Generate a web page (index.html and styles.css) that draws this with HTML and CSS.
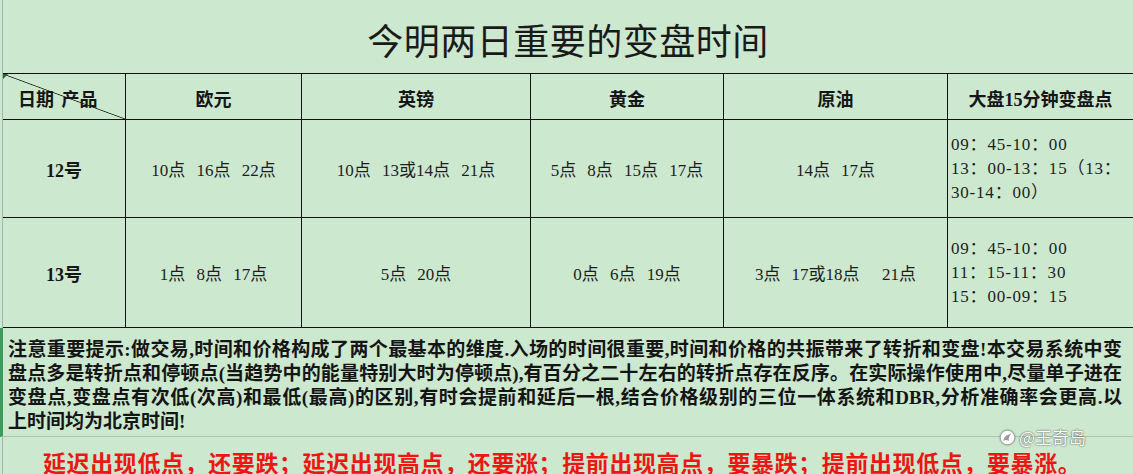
FILE: index.html
```html
<!DOCTYPE html>
<html lang="zh-CN">
<head>
<meta charset="utf-8">
<title>今明两日重要的变盘时间</title>
<link rel="stylesheet" href="styles.css">
</head>
<body>
<div class="sheet">
  <h1 class="title">今明两日重要的变盘时间</h1>
  <div class="grid">
    <div class="cell head corner">日期 产品</div>
    <div class="cell head">欧元</div>
    <div class="cell head">英镑</div>
    <div class="cell head">黄金</div>
    <div class="cell head">原油</div>
    <div class="cell head end">大盘15分钟变盘点</div>

    <div class="cell label">12号</div>
    <div class="cell data">10点 16点 22点</div>
    <div class="cell data">10点 13或14点 21点</div>
    <div class="cell data">5点 8点 15点 17点</div>
    <div class="cell data">14点 17点</div>
    <div class="cell times end">09：45-10：00<br>13：00-13：15（13：<br>30-14：00）</div>

    <div class="cell label">13号</div>
    <div class="cell data">1点 8点 17点</div>
    <div class="cell data">5点 20点</div>
    <div class="cell data">0点 6点 19点</div>
    <div class="cell data">3点 17或18点  21点</div>
    <div class="cell times end">09：45-10：00<br>11：15-11：30<br>15：00-09：15</div>
  </div>
  <div class="note">
    <p class="line">注意重要提示:做交易,时间和价格构成了两个最基本的维度.入场的时间很重要,时间和价格的共振带来了转折和变盘!本交易系统中变</p>
    <p class="line">盘点多是转折点和停顿点(当趋势中的能量特别大时为停顿点),有百分之二十左右的转折点存在反序。在实际操作使用中,尽量单子进在</p>
    <p class="line">变盘点,变盘点有次低(次高)和最低(最高)的区别,有时会提前和延后一根,结合价格级别的三位一体系统和DBR,分析准确率会更高.以</p>
    <p class="line last">上时间均为北京时间!</p>
  </div>
  <div class="warn">延迟出现低点，还要跌；延迟出现高点，还要涨；提前出现高点，要暴跌；提前出现低点，要暴涨。</div>
  <div class="mark">
    <svg class="mark-icon" viewBox="0 0 20 20" width="17" height="17" aria-hidden="true">
      <circle cx="10" cy="10" r="8.5" fill="#ffffff" stroke="#8a8a8a" stroke-width="0.8"/>
      <path d="M5 14 C6 9 9 6.5 14.5 5.5 C12 8 11 10.5 11.5 14.5 C9.5 12.5 7.5 12.5 5 14 Z" fill="#9a9a9a"/>
    </svg>
    <span class="mark-text">@王奇岛</span>
  </div>
</div>
</body>
</html>
```
FILE: styles.css
```css
html, body {
  margin: 0;
  padding: 0;
}

body {
  width: 1133px;
  height: 474px;
  overflow: hidden;
  background: #cce8cf;
  color: #161616;
  font-family: "Liberation Serif", "Noto Sans CJK SC", serif;
}

.sheet {
  position: relative;
  margin-left: 2px;
  height: 474px;
  border-left: 1px solid #a3b6ab;
}

.title {
  margin: 0;
  height: 73px;
  box-sizing: border-box;
  padding-top: 4px;
  display: flex;
  align-items: center;
  justify-content: center;
  font-family: "Noto Sans CJK SC", serif;
  font-size: 36px;
  font-weight: 400;
  letter-spacing: 0.5px;
  color: #1a1a1a;
}

.grid {
  display: grid;
  grid-template-columns: 123px 176px 229px 193px 224px 185px;
  grid-template-rows: 46px 98px 110px;
  border-top: 1px solid #111;
}

.cell {
  box-sizing: border-box;
  border-right: 1px solid #111;
  border-bottom: 1px solid #111;
  display: flex;
  align-items: center;
  justify-content: center;
  font-size: 17px;
}

.cell.end {
  border-right: none;
}

.head {
  font-size: 18px;
  font-weight: 700;
  padding-top: 2px;
}

.corner {
  position: relative;
  justify-content: flex-start;
  padding-left: 15px;
  word-spacing: 3px;
  background: linear-gradient(to top right, transparent calc(50% - 0.8px), #222 50%, transparent calc(50% + 0.8px));
}

.corner::before {
  content: "";
  position: absolute;
  left: 0;
  top: 0;
  border-top: 5px solid #1d6b34;
  border-right: 5px solid transparent;
}

.label {
  font-size: 18px;
  font-weight: 700;
}

.data {
  white-space: pre;
  word-spacing: 7px;
  color: #1e1e1e;
}

.times {
  justify-content: flex-start;
  padding-left: 3px;
  line-height: 24px;
  letter-spacing: 0.8px;
  color: #1e1e1e;
}

.note {
  margin-left: -3px;
  height: 109px;
  box-sizing: border-box;
  border-left: 3px solid #3b9b5c;
  border-bottom: 1px solid #aec3b2;
  padding: 10px 11px 0 5px;
  font-size: 19px;
  font-weight: 700;
  line-height: 24px;
  color: #151515;
}

.line {
  margin: 0;
  white-space: nowrap;
  text-align: justify;
  text-align-last: justify;
}

.line.last {
  text-align-last: left;
}

.warn {
  padding: 14px 0 0 40px;
  font-family: "Noto Sans CJK SC", serif;
  font-size: 23px;
  letter-spacing: 0.6px;
  font-weight: 700;
  line-height: 22px;
  color: #ee1612;
  white-space: nowrap;
}

.mark {
  position: absolute;
  left: 996px;
  top: 427px;
  display: flex;
  align-items: center;
  gap: 3px;
}

.mark-icon {
  filter: drop-shadow(0 0 1px rgba(0, 0, 0, 0.35));
}

.mark-text {
  font-family: "Noto Sans CJK SC", sans-serif;
  font-size: 17px;
  line-height: 20px;
  color: #ffffff;
  text-shadow: 0 0 2px rgba(0, 0, 0, 0.55), 0 0 1px rgba(0, 0, 0, 0.5);
}
```
